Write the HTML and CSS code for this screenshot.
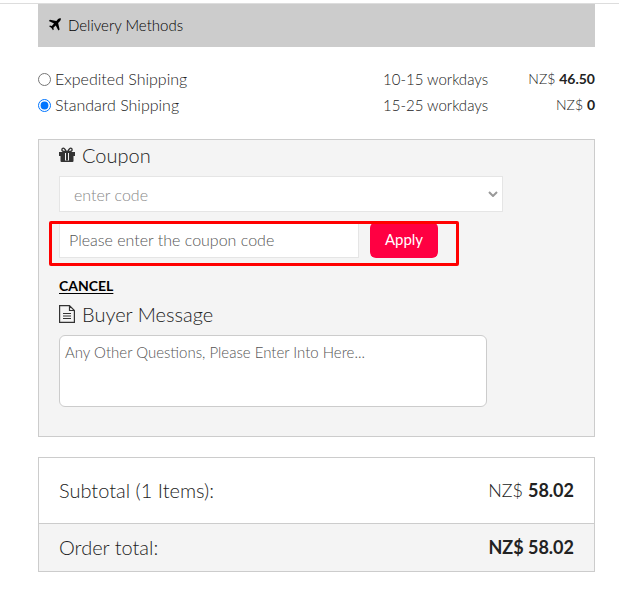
FILE: index.html
```html
<!DOCTYPE html>
<html lang="en">
<head>
    <meta charset="UTF-8">
    <meta name="viewport" content="width=device-width, initial-scale=1.0">
    <title>Checkout</title>
    <link rel="stylesheet" href="styles.css">
</head>
<body>
    <form class="checkout">
        <h2 class="section-header">
            <svg class="icon-plane" viewBox="0 0 14 14" aria-hidden="true">
                <path d="M13.6.4c.6.7.1 2-.6 2.800L10.900 5.300l1.600 7-1.300 1.200-2.900-5.500-2.500 2.400.4 1.900-.9.900-1.500-2.500L1.200 9l.9-.9 2 .4 2.400-2.500L.9 3.100l1.200-1.300 6.900 1.500L10.900 1.100C11.700.4 13-.2 13.600.4z"/>
            </svg>
            Delivery Methods
        </h2>

        <div class="shipping">
            <div class="method">
                <label><input type="radio" name="shipping" value="expedited">Expedited Shipping</label>
                <span class="days">10-15 workdays</span>
                <span class="price">NZ$ <b>46.50</b></span>
            </div>
            <div class="method">
                <label><input type="radio" name="shipping" value="standard" checked>Standard Shipping</label>
                <span class="days">15-25 workdays</span>
                <span class="price">NZ$ <b>0</b></span>
            </div>
        </div>

        <div class="panel">
            <h3 class="title">
                <svg class="icon" viewBox="0 0 16 16" aria-hidden="true">
                    <path fill="none" stroke="#333" stroke-width="1.300" d="M7.500 5C6 1.500 4.800.8 3.700 1.400 2.300 2.200 2.500 4.400 5 4.500h6c2.500-.1 2.700-2.300 1.300-3.100C11.200.8 10 1.500 8.500 5"/>
                    <path fill="#333" d="M0 5h16v4h-1.500v5a1 1 0 0 1-1 1h-11a1 1 0 0 1-1-1V9H0z"/>
                    <path fill="#f4f4f4" d="M6 6h4v7.500H6z"/>
                    <path fill="#333" d="M7 6h2v7.500H7z"/>
                </svg>
                <label for="coupon">Coupon</label>
            </h3>
            <div class="select-wrap">
                <select id="coupon">
                    <option>enter code</option>
                </select>
                <svg class="arrow" viewBox="0 0 10 6" aria-hidden="true">
                    <path d="M1 1l4 4 4-4"/>
                </svg>
            </div>
            <div class="code-row">
                <input type="text" class="code" placeholder="Please enter the coupon code" aria-label="Coupon code">
                <button type="button" class="apply">Apply</button>
            </div>
            <a href="#" class="cancel">CANCEL</a>

            <h3 class="title">
                <svg class="icon icon-doc" viewBox="0 0 16 18" aria-hidden="true">
                    <path d="M.6.600H10.500L15.400 5.500V17.400H.6zM10.500.600V5.500H15.400M4 8.500h8M4 11h8M4 13.500h8"/>
                </svg>
                <label for="message">Buyer Message</label>
            </h3>
            <textarea id="message" class="message" placeholder="Any Other Questions, Please Enter Into Here..."></textarea>
        </div>

        <div class="totals">
            <div class="total-row">
                <span>Subtotal (1 Items):</span>
                <span class="amount">NZ$ <b>58.02</b></span>
            </div>
            <div class="total-row order-total">
                <span>Order total:</span>
                <b class="amount">NZ$ 58.02</b>
            </div>
        </div>
    </form>
</body>
</html>
```

FILE: styles.css
```css
* {
    box-sizing: border-box;
}

body {
    margin: 3px 0 0;
    border-top: 1px solid #ddd;
    background-color: #fff;
    color: #222;
    font-family: "Century Gothic", Lato, sans-serif;
    font-size: 16px;
    font-weight: 300;
}

b {
    font-weight: 700;
}

input,
select,
textarea,
button {
    font: inherit;
}

.checkout {
    margin: 0 24px 20px 38px;
}

.section-header {
    display: flex;
    align-items: center;
    gap: 7px;
    height: 43px;
    margin: 0;
    padding: 0 10px 2px;
    background-color: #ccc;
    color: #000;
    font-size: 15px;
    font-weight: 300;
}

.icon-plane {
    width: 13px;
    height: 13px;
}

.shipping {
    padding: 19px 0 21px;
}

.method {
    display: grid;
    grid-template-columns: 1fr 112px 100px;
    line-height: 26px;
    white-space: nowrap;
}

.method label {
    display: flex;
    align-items: center;
    gap: 4px;
}

.method input {
    width: 13px;
    height: 13px;
    margin: 0;
    accent-color: #0075ff;
}

.days {
    font-size: 15px;
}

.price {
    font-size: 14px;
    text-align: right;
}

.panel {
    padding: 3px 20px 29px;
    background-color: #f4f4f4;
    border: 1px solid #ccc;
}

.title {
    display: flex;
    align-items: center;
    gap: 7px;
    height: 24px;
    margin: 0;
    font-size: 20px;
    font-weight: 300;
}

.icon {
    width: 16px;
    height: 16px;
}

.icon-doc {
    height: 18px;
    fill: none;
    stroke: #333;
    stroke-width: 1.2;
}

.select-wrap {
    position: relative;
    max-width: 444px;
    margin: 9px 0 10px;
}

.select-wrap select {
    display: block;
    width: 100%;
    height: 36px;
    padding: 0 14px;
    appearance: none;
    background-color: #fff;
    border: 1px solid #e5e5e5;
    border-radius: 0;
    color: #888;
}

.arrow {
    position: absolute;
    top: 15px;
    right: 5px;
    width: 10px;
    height: 6px;
    fill: none;
    stroke: #999;
    stroke-width: 2;
    pointer-events: none;
}

.code-row {
    display: flex;
    gap: 11px;
    position: relative;
    max-width: 379px;
}

/* red highlight around the coupon code row */
.code-row::after {
    content: "";
    position: absolute;
    inset: -1px -21px -8px -10px;
    border: 3px solid #f00;
    border-radius: 2px;
    pointer-events: none;
}

.code {
    flex: 1;
    min-width: 0;
    height: 36px;
    padding: 0 9px 2px;
    border: 1px solid #e5e5e5;
}

.code::placeholder,
.message::placeholder {
    color: #555;
}

.apply {
    width: 68px;
    height: 36px;
    padding: 0 0 2px;
    background-color: #ff0042;
    border: 0;
    border-radius: 6px;
    color: #fff;
    font-size: 15px;
    font-weight: 400;
}

.cancel {
    display: block;
    width: max-content;
    margin-top: 16px;
    color: #000;
    font-size: 14px;
    font-weight: 700;
    line-height: 24px;
    text-underline-offset: 2px;
}

.cancel + .title {
    margin: 4px 0 9px;
}

.message {
    display: block;
    width: 100%;
    max-width: 428px;
    height: 72px;
    padding: 7px 5px;
    border: 1px solid #ccc;
    border-radius: 6px;
    font-size: 15px;
    resize: none;
}

.totals {
    margin-top: 20px;
    border: 1px solid #ccc;
    font-size: 20px;
}

.total-row {
    display: flex;
    justify-content: space-between;
    align-items: center;
    height: 65px;
    padding: 0 20px 2px;
}

.amount {
    font-size: 18px;
}

.order-total {
    height: 48px;
    background-color: #f4f4f4;
    border-top: 1px solid #ccc;
}
```
